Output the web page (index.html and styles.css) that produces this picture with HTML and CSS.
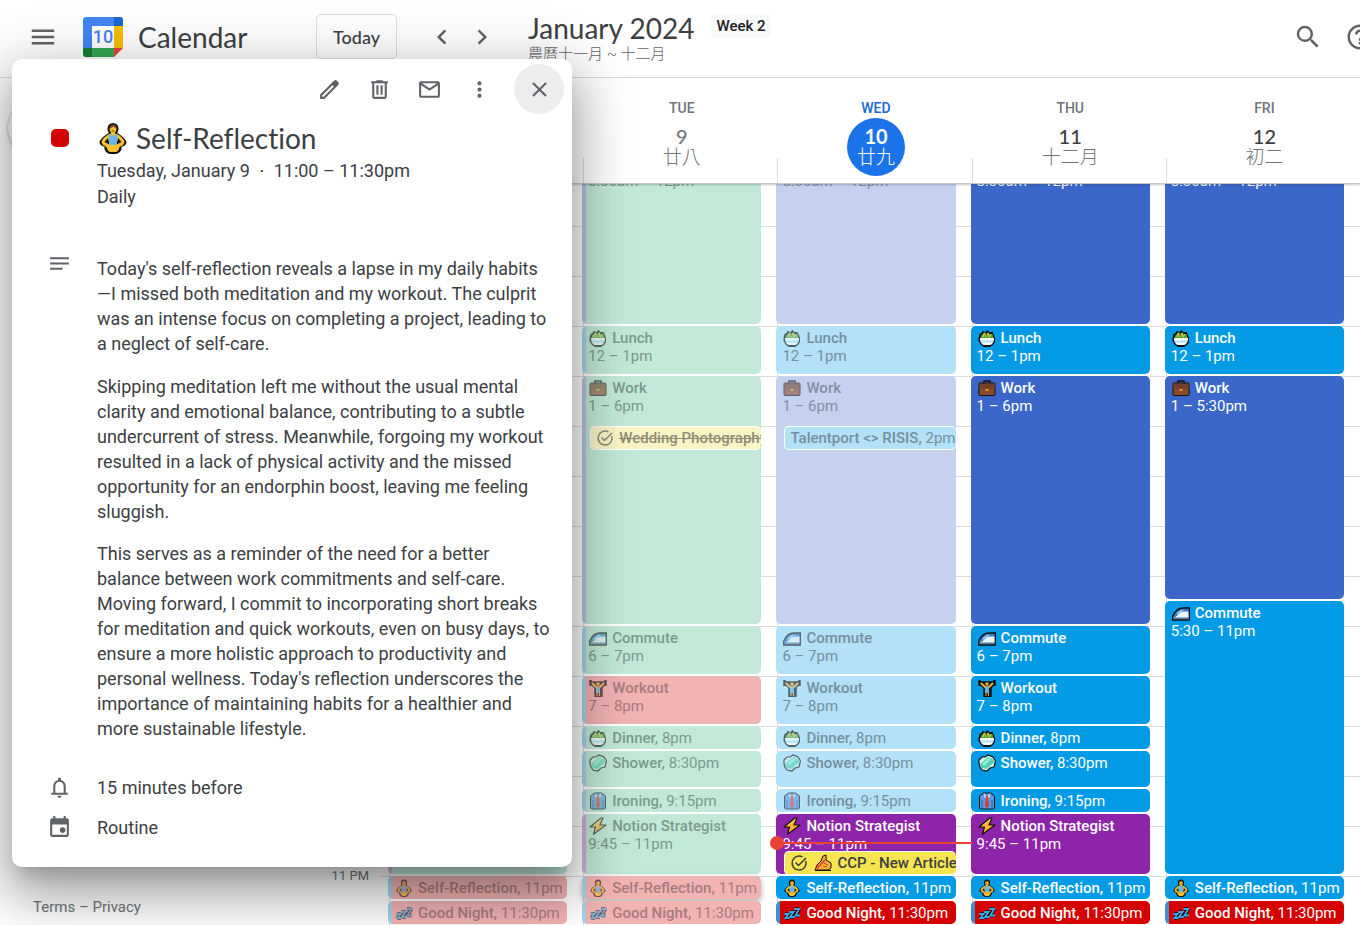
FILE: index.html
```html
<!DOCTYPE html>
<html lang="en">
<head>
  <meta charset="utf-8">
  <title>Calendar</title>
  <link rel="stylesheet" href="styles.css">
</head>
<body>

  <!-- icons shared by the events -->
  <svg class="sprite" aria-hidden="true">
    <symbol id="salad" viewBox="0 0 18 18">
      <path d="M0.500 9L1.500 5l2-1 1-2 3 1 2-2 2 2 3 0 1.500 3 1 3v4l-2 3-3 2H6l-3-2-2.500-4z" fill="#111"/>
      <path d="M2.500 9l1-3 2-1 1-2 2 2 2-2 1 2 3 0 1 4z" fill="#57a52c"/>
      <path d="M5 8l1-4 2 4 2-4 1 4 2-3" fill="none" stroke="#b4e05c"/>
      <circle cx="8.500" cy="6.500" r="1" fill="#e2492f"/>
      <path d="M2 9h14c0 4-2 7-4 7H6c-2 0-4-3-4-7z" fill="#fff"/>
      <path d="M2.500 11.500h13l-.7 2H3.200z" fill="#a9e2f7"/>
    </symbol>
    <symbol id="briefcase" viewBox="0 0 18 18">
      <path d="M6 4V2h6v2" fill="none" stroke="#111" stroke-width="1.500"/>
      <rect x="1" y="4" width="16" height="12.500" rx="1" fill="#8b4b2b" stroke="#111"/>
      <path d="M1.500 5h15v4.500l-5 1h-5l-5-1z" fill="#75402a"/>
      <path d="M7.500 10h3v1.500h-3z" fill="#f5b93c"/>
    </symbol>
    <symbol id="train" viewBox="0 0 18 18">
      <path d="M.7 15v-3C3 7 7 4 11 4h6.300v12H.7z" fill="#2f7fc6" stroke="#111" stroke-width="1.300"/>
      <path d="M2 13.500C6 12.500 7 7.500 12 7.500h4.500v6z" fill="#eef4fb"/>
      <path d="M5 9l4-3h3c-3 1-4 3-7 5z" fill="#a7d4f5"/>
      <path d="M1.500 14.700h15" stroke="#777"/>
    </symbol>
    <symbol id="lifter" viewBox="0 0 18 18">
      <path d="M1.500 1v6M16.500 1v6M1 3.500h16" stroke="#111" stroke-width="2.500"/>
      <path d="M3 4l4.500 4v9h4V8L15 4" fill="none" stroke="#111" stroke-width="4.500"/>
      <path d="M3 4l4 4h4l4-4" fill="none" stroke="#f0b43c" stroke-width="2"/>
      <circle cx="9" cy="5" r="2" fill="#f0b43c" stroke="#111" stroke-width=".6"/>
      <path d="M7 8h4v6H7z" fill="#58b7dc"/>
      <path d="M8 14v3M10.500 14v3" stroke="#f0b43c"/>
    </symbol>
    <symbol id="soap" viewBox="0 0 18 18">
      <path d="M1 6l3-3 3 0 3-2 5 2 2.500 4-1.500 6-4 1-3 3-5-1-2-3-1-3z" fill="#d8f5ef" stroke="#111" stroke-width="1.200"/>
      <path d="M2 10l8-7 5 2 1.500 3-8 7-5-1z" fill="#53d2b3"/>
      <path d="M4 10l6-6 3 1-7 7z" fill="#93ecd6"/>
    </symbol>
    <symbol id="shirt" viewBox="0 0 18 18">
      <path d="M1.500 4l4-3h7l4 3v12l-1 1H2.500l-1-1z" fill="#5a97dd" stroke="#111"/>
      <path d="M4 8v9M14 8v9" stroke="#2c5e9c"/>
      <path d="M6 1l3 4 3-4v4l-3 2-3-2z" fill="#b9dafa"/>
      <path d="M8 4h2l1 10-2 2-2-2z" fill="#d63a31"/>
    </symbol>
    <symbol id="bolt" viewBox="0 0 18 18">
      <path d="M12 1L1 10h5.500L4.500 17.300 17 8h-6L14 1z" fill="#fdb32c" stroke="#111" stroke-width="1.200" stroke-linejoin="round"/>
      <path d="M12 2.500L5 8.500" stroke="#ffe082"/>
    </symbol>
    <symbol id="yoga" viewBox="0 0 30 32">
      <path d="M9.500 6.500a5.500 5.500 0 0 1 11 0c0 2-.5 3.500-1.500 4.500 3 1 9.500 6.500 9.500 9.500 0 2-2.500 3.500-5 4.500 1 3-3 7-5.500 7h-6c-2.500 0-6.500-4-5.500-7-2.500-1-5-2.500-5-4.500 0-3 6.500-8.500 9.500-9.500-1-1-1.500-2.500-1.500-4.500z" fill="#111"/>
      <path d="M13 9h4v2.500l3 1c3 2 6.500 5.500 6.500 7.500 0 3-5.500 4-7.500 4.500h-8C9 24 3.500 23 3.500 20c0-2 3.500-5.500 6.500-7.500l3-1z" fill="#fbc02d"/>
      <path d="M10 16l-3.500 4 5 2.500zM20 16l3.500 4-5 2.500z" fill="#111"/>
      <path d="M11 12.500l4 1 4-1 .5 4-1 6.500h-7l-1-6.500z" fill="#69b4e8"/>
      <path d="M4 22c3 1.500 7 3 11 1.500C19 25 23 23.500 26 22c-1 2-3 2-4.500 3-.5 3-2.500 5-4 5h-5c-1.500 0-3.500-2-4-5C7 24 5 24 4 22z" fill="#fbc02d"/>
      <circle cx="15" cy="7" r="3.500" fill="#fbc02d"/>
      <path d="M11.500 7c-.5-6 7.500-6 7 0l-3-2.500z" fill="#7a4b22"/>
      <path d="M13.500 9h3" stroke="#8a4e12"/>
    </symbol>
    <symbol id="zzz" viewBox="0 0 18 18">
      <g fill="none" stroke="#111" stroke-width="3.600" stroke-linejoin="bevel"><path d="M2 10h3.500L2.500 14H6M6.500 8h4L7 13h4M12 5h4.200L12.500 11.500h4"/></g>
      <g fill="none" stroke="#3aa9ea" stroke-width="1.800"><path d="M1.500 10h4L2.500 14H6M6 8h4.500L7 13h4.500M11.500 5h4.700L12.500 11.500h4.500"/></g>
    </symbol>
    <symbol id="writing" viewBox="0 0 18 18">
      <path d="M1 16L3 11l4-4 2-5 3-1 0 5 5 3v5l-3 2z" fill="#fbb03b" stroke="#111"/>
      <path d="M2 15L11 6" stroke="#e5532d" stroke-width="2"/>
      <path d="M10 9l4 2M9 12l4 1" stroke="#a85a10"/>
      <path d="M1 16.500h16" stroke="#111"/>
    </symbol>
    <symbol id="check" viewBox="0 0 18 18">
      <path d="M15.800 7A7 7 0 1 1 12.500 2.900" fill="none" stroke="currentColor" stroke-width="1.500"/>
      <path d="M5.500 8.500L8.500 11.500L16 4" fill="none" stroke="currentColor" stroke-width="1.500"/>
    </symbol>
  </svg>

  <header class="topbar">
    <button class="icon-btn" aria-label="Main menu">
      <svg width="30" height="30" viewBox="0 0 24 24"><path d="M3 18h18v-2H3v2zm0-5h18v-2H3v2zm0-7v2h18V6H3z"/></svg>
    </button>
    <a class="brand" href="#">
      <svg class="logo" viewBox="0 0 40 40" width="40" height="40">
        <path d="M3 0h28v9H9v22H0V3a3 3 0 0 1 3-3z" fill="#4285f4"/>
        <path d="M31 0h6a3 3 0 0 1 3 3v6h-9z" fill="#1967d2"/>
        <path d="M31 9h9v22h-9z" fill="#fbbc04"/>
        <path d="M9 31h22v9H9z" fill="#34a853"/>
        <path d="M0 31h9v9H3a3 3 0 0 1-3-3z" fill="#188038"/>
        <path d="M31 31h9l-9 9z" fill="#ea4335"/>
        <path d="M9 9h22v22H9z" fill="#fff"/>
        <text x="20" y="26" text-anchor="middle" class="logo-day">10</text>
      </svg>
      <span>Calendar</span>
    </a>
    <button class="today">Today</button>
    <div class="pager">
      <button class="icon-btn" aria-label="Previous week">
        <svg width="30" height="30" viewBox="0 0 24 24"><path d="M15.400 7.400L14 6l-6 6 6 6 1.400-1.400-4.600-4.600z"/></svg>
      </button>
      <button class="icon-btn" aria-label="Next week">
        <svg width="30" height="30" viewBox="0 0 24 24"><path d="M10 6L8.600 7.400l4.600 4.600-4.600 4.600L10 18l6-6z"/></svg>
      </button>
    </div>
    <div class="period">
      <h1>January 2024</h1>
      <div class="lunar">農曆十一月 ~ 十二月</div>
    </div>
    <span class="week">Week 2</span>
    <div class="tools">
      <button class="icon-btn" aria-label="Search">
        <svg width="30" height="30" viewBox="0 0 24 24"><path d="M15.500 14h-.79l-.28-.27A6.470 6.470 0 0 0 16 9.500 6.500 6.500 0 1 0 9.500 16c1.610 0 3.090-.59 4.230-1.570l.27.28v.79l5 4.990L20.490 19l-4.990-5zm-6 0C7.010 14 5 11.990 5 9.500S7.010 5 9.500 5 14 7.010 14 9.500 11.990 14 9.500 14z"/></svg>
      </button>
      <button class="icon-btn" aria-label="Help">
        <svg width="30" height="30" viewBox="0 0 24 24"><path d="M11 18h2v-2h-2v2zm1-16C6.480 2 2 6.480 2 12s4.480 10 10 10 10-4.480 10-10S17.520 2 12 2zm0 18c-4.410 0-8-3.590-8-8s3.590-8 8-8 8 3.590 8 8-3.590 8-8 8zm0-14c-2.210 0-4 1.790-4 4h2c0-1.100.9-2 2-2s2 .9 2 2c0 2-3 1.750-3 5h2c0-2.250 3-2.500 3-5 0-2.210-1.790-4-4-4z"/></svg>
      </button>
    </div>
  </header>

  <div class="layout">
    <aside class="sidebar">
      <button class="create" aria-label="Create"></button>
      <div class="legal"><a href="#">Terms</a> – <a href="#">Privacy</a></div>
    </aside>

    <main class="calendar">
      <div class="day-heads">
        <div class="gutter"></div>
        <div class="head past"><span class="dow">MON</span><span class="num">8<small>廿七</small></span></div>
        <div class="head past"><span class="dow">TUE</span><span class="num">9<small>廿八</small></span></div>
        <div class="head now"><span class="dow">WED</span><span class="num">10<small>廿九</small></span></div>
        <div class="head"><span class="dow">THU</span><span class="num">11<small>十二月</small></span></div>
        <div class="head"><span class="dow">FRI</span><span class="num">12<small>初二</small></span></div>
      </div>
      <div class="scroller">
        <div class="hours">
          <div class="gutter times" id="times"></div>
          <div class="day"></div>
          <div class="day"></div>
          <div class="day"></div>
          <div class="day"></div>
          <div class="day"></div>
        </div>
      </div>
    </main>
  </div>

  <section class="popup" role="dialog" aria-label="Self-Reflection">
    <div class="actions">
      <button class="icon-btn" aria-label="Edit event">
        <svg width="25" height="25" viewBox="0 0 24 24"><path d="M20.410 4.940l-1.350-1.350a2 2 0 0 0-2.830 0L3 16.820V21h4.180L20.410 7.770a2 2 0 0 0 0-2.830zM6.410 19.060L5 19v-1.360l9.820-9.820 1.410 1.410z"/></svg>
      </button>
      <button class="icon-btn" aria-label="Delete event">
        <svg width="25" height="25" viewBox="0 0 24 24"><path d="M15 4V3H9v1H4v2h1v13c0 1.100.9 2 2 2h10c1.100 0 2-.9 2-2V6h1V4h-5zm2 15H7V6h10v13zM9 8h2v9H9zm4 0h2v9h-2z"/></svg>
      </button>
      <button class="icon-btn" aria-label="Email guests">
        <svg width="25" height="25" viewBox="0 0 24 24"><path d="M20 4H4c-1.100 0-2 .9-2 2v12c0 1.100.9 2 2 2h16c1.100 0 2-.9 2-2V6c0-1.100-.9-2-2-2zm-.8 2L12 10.800 4.800 6zM4 18V7.870l8 5.330 8-5.330V18z"/></svg>
      </button>
      <button class="icon-btn" aria-label="Options">
        <svg width="25" height="25" viewBox="0 0 24 24"><path d="M12 8c1.100 0 2-.9 2-2s-.9-2-2-2-2 .9-2 2 .9 2 2 2zm0 2c-1.100 0-2 .9-2 2s.9 2 2 2 2-.9 2-2-.9-2-2-2zm0 6c-1.100 0-2 .9-2 2s.9 2 2 2 2-.9 2-2-.9-2-2-2z"/></svg>
      </button>
      <button class="icon-btn close" aria-label="Close">
        <svg width="25" height="25" viewBox="0 0 24 24"><path d="M19 6.410L17.590 5 12 10.590 6.410 5 5 6.410 10.590 12 5 17.590 6.410 19 12 13.410 17.590 19 19 17.590 13.410 12z"/></svg>
      </button>
    </div>

    <div class="row">
      <div class="mark"><span class="swatch"></span></div>
      <div>
        <h2><svg width="32" height="32"><use href="#yoga"/></svg>Self-Reflection</h2>
        <div class="when">Tuesday, January 9 &nbsp;⋅&nbsp; 11:00 – 11:30pm</div>
        <div class="when">Daily</div>
      </div>
    </div>

    <div class="row notes">
      <div class="mark">
        <svg width="25" height="25" viewBox="0 0 24 24"><path d="M3 18h12v-2H3v2zM3 6v2h18V6H3zm0 7h18v-2H3v2z"/></svg>
      </div>
      <div>
        <p>Today's self-reflection reveals a lapse in my daily habits<wbr><span class="keep">—I</span> missed both meditation and my workout. The culprit was an intense focus on completing a project, leading to a neglect of self-care.</p>
        <p>Skipping meditation left me without the usual mental clarity and emotional balance, contributing to a subtle undercurrent of stress. Meanwhile, forgoing my workout resulted in a lack of physical activity and the missed opportunity for an endorphin boost, leaving me feeling sluggish.</p>
        <p>This serves as a reminder of the need for a better balance between work commitments and self-care. Moving forward, I commit to incorporating short breaks for meditation and quick workouts, even on busy days, to ensure a more holistic approach to productivity and personal wellness. Today's reflection underscores the importance of maintaining habits for a healthier and more sustainable lifestyle.</p>
      </div>
    </div>

    <div class="row detail">
      <div class="mark">
        <svg width="25" height="25" viewBox="0 0 24 24"><path d="M18 17v-6c0-3.070-1.630-5.640-4.500-6.320V4a1.500 1.500 0 0 0-3 0v.68C7.640 5.360 6 7.920 6 11v6H4v2h16v-2h-2zm-2 0H8v-6c0-2.480 1.510-4.500 4-4.500s4 2.020 4 4.500v6zm-4 5c1.100 0 2-.9 2-2h-4c0 1.100.9 2 2 2z"/></svg>
      </div>
      <div>15 minutes before</div>
    </div>
    <div class="row detail">
      <div class="mark">
        <svg width="25" height="25" viewBox="0 0 24 24"><path d="M19 3h-1V1h-2v2H8V1H6v2H5c-1.100 0-2 .9-2 2v14c0 1.100.9 2 2 2h14c1.100 0 2-.9 2-2V5c0-1.100-.9-2-2-2zm0 16H5V9h14v10z"/><circle cx="15" cy="14.500" r="2.700"/></svg>
      </div>
      <div>Routine</div>
    </div>
  </section>

  <script src="script.js"></script>
</body>
</html>
```
FILE: styles.css
```css
* {
  box-sizing: border-box;
}

body {
  margin: 0;
  height: 100vh;
  display: flex;
  flex-direction: column;
  overflow: hidden;
  background: #fff;
  color: #3c4043;
  font-family: Roboto, "Noto Sans CJK TC", sans-serif;
  font-size: 18px;
}

button {
  font: inherit;
  color: inherit;
  padding: 0;
  border: 0;
  background: none;
  cursor: pointer;
}

a {
  color: inherit;
  text-decoration: none;
}

svg {
  fill: #5f6368;
  flex: none;
}

.sprite {
  display: none;
}

.icon-btn {
  width: 50px;
  height: 50px;
  flex: none;
  display: flex;
  align-items: center;
  justify-content: center;
  border-radius: 50%;
}

/* top bar */
.topbar {
  height: 78px;
  flex: none;
  display: flex;
  align-items: center;
  padding: 0 0 4px 18px;
  border-bottom: 1px solid #dadce0;
}

.brand {
  display: flex;
  align-items: center;
  gap: 15px;
  width: 233px;
  margin-left: 15px;
  font-family: Lato, sans-serif;
  font-size: 28px;
}

.logo-day {
  font: 500 18px Roboto, sans-serif;
  fill: #4285f4;
}

.today {
  width: 81px;
  height: 45px;
  border: 1px solid #dadce0;
  border-radius: 5px;
  font-family: Lato, sans-serif;
  font-weight: 500;
}

.pager {
  display: flex;
  margin-left: 25px;
}

.pager .icon-btn {
  width: 40px;
}

.period {
  align-self: flex-start;
  margin-left: 26px;
  padding-top: 11px;
}

.period h1 {
  margin: 0;
  font: 400 28px/34px Lato, sans-serif;
}

.lunar {
  font-size: 15px;
  line-height: 18px;
  font-weight: 300;
  color: #5f6368;
}

.week {
  align-self: flex-start;
  margin: 14px 0 0 17px;
  padding: 0 5px;
  border-radius: 5px;
  background: #f8f9fa;
  color: #202124;
  font-size: 15px;
  line-height: 24px;
  font-weight: 500;
}

.tools {
  display: flex;
  margin-left: auto;
  margin-right: -25px;
  gap: 2px;
}

/* page below the bar */
.layout {
  flex: 1;
  min-height: 0;
  display: flex;
}

.sidebar {
  width: 320px;
  flex: none;
  display: flex;
  flex-direction: column;
  justify-content: space-between;
  padding: 22px 0 8px 8px;
}

.create {
  width: 120px;
  height: 56px;
  border-radius: 28px;
  background: #fff;
  box-shadow: 0 1px 3px rgba(60, 64, 67, 0.5);
}

.legal {
  padding-left: 25px;
  font-size: 15px;
  line-height: 20px;
  color: #70757a;
}

.calendar {
  flex: 1;
  min-width: 0;
  display: flex;
  flex-direction: column;
}

.day-heads,
.hours {
  display: grid;
  grid-template-columns: 69px repeat(5, 1fr);
}

.day-heads {
  height: 106px;
  flex: none;
  z-index: 1;
  border-bottom: 1px solid #c4c7cb;
  box-shadow: 0 1px 2px rgba(60, 64, 67, 0.3);
}

.head {
  display: flex;
  flex-direction: column;
  align-items: center;
  padding: 21px 0 0 3px;
  background: linear-gradient(#dadce0, #dadce0) left bottom / 1px 25px no-repeat;
}

.dow {
  font-size: 14px;
  line-height: 19px;
  font-weight: 500;
  color: #70757a;
}

.num {
  display: flex;
  flex-direction: column;
  align-items: center;
  width: 58px;
  height: 58px;
  padding-top: 8px;
  border-radius: 50%;
  font: 500 20px/20px Lato, sans-serif;
}

.num small {
  font: 300 19px/20px "Noto Sans CJK TC", sans-serif;
  color: #70757a;
  white-space: nowrap;
}

.past .num {
  color: #70757a;
}

.now .dow {
  color: #1967d2;
}

.now .num {
  background: #1a73e8;
  font-weight: 700;
}

.now .num,
.now small {
  color: #fff;
}

.scroller {
  flex: 1;
  min-height: 0;
  overflow: hidden;
}

/* the first row is 8:30am, one hour is 50px */
.hours {
  height: 775px;
  margin-top: -33px;
  background: repeating-linear-gradient(#dadce0 0 1px, transparent 1px 50px) 60px 25px no-repeat;
}

.times,
.day {
  display: grid;
  grid-template-rows: repeat(62, 1fr);
  min-width: 0;
}

.times {
  padding-right: 20px;
  text-align: right;
  font-size: 13px;
  line-height: 20px;
  color: #70757a;
}

.times span {
  height: 20px;
  margin-top: -10px;
}

.day {
  position: relative;
  border-left: 1px solid #dadce0;
}

/* events */
.event {
  grid-column: 1;
  margin: 0 16px 2px -2px;
  padding: 3px 0 0 6px;
  border-radius: 5px;
  overflow: hidden;
  white-space: nowrap;
  font-size: 15px;
  line-height: 18px;
  color: #fff;
}

.event b {
  font-weight: 500;
}

.event svg {
  width: 20px;
  height: 18px;
  margin-right: 4px;
  vertical-align: top;
}

.event .check {
  width: 18px;
  margin-right: 5px;
  color: #3c4043;
}

.sky { background: #039be5; }
.blue { background: #3a67c9; }
.grape { background: #8e24aa; }
.red { background: #d50000; }
.green { background: #33b679; }
.yellow { background: #f6e550; color: #3c4043; }

.stripe-sky { background-image: linear-gradient(#3c8fc9, #3c8fc9); }
.stripe-blue { background-image: linear-gradient(#3a67c9, #3a67c9); }
.stripe-grape { background-image: linear-gradient(#8e24aa, #8e24aa); }

.stripe-sky,
.stripe-blue,
.stripe-grape {
  background-size: 4px 100%;
  background-repeat: no-repeat;
}

/* finished events fade to 30% of their colour */
.done { color: #84909a; }
.done svg { opacity: 0.6; }
.done.sky { background-color: #b3e1f7; color: #7490a0; }
.done.blue { background-color: #c4d1ef; color: #868ea6; }
.done.green { background-color: #c2e9d7; color: #7b9a8d; }
.done.red { background-color: #f2b3b3; color: #a77c7f; }
.done.yellow { background-color: #fbf5c6; color: #8f8d76; }
.done.stripe-sky { background-image: linear-gradient(#a6d3ea, #a6d3ea); }
.done.stripe-blue { background-image: linear-gradient(#b6c3e4, #b6c3e4); }
.done.stripe-grape { background-image: linear-gradient(#d0b0dc, #d0b0dc); }

.inset {
  z-index: 3;
  margin-left: 6px;
  margin-bottom: 1px;
  padding: 2px 0 0 5px;
  border: 1px solid #fff;
  border-right: 0;
}

.raised {
  box-shadow: 0 4px 5px rgba(0, 0, 0, 0.2), 0 1px 10px rgba(0, 0, 0, 0.12);
}

.now-line {
  position: absolute;
  left: -1px;
  right: 0;
  height: 2px;
  z-index: 2;
  background: #ea4335;
}

.now-line::before {
  content: "";
  position: absolute;
  left: -7px;
  top: -6px;
  width: 14px;
  height: 14px;
  border-radius: 50%;
  background: #ea4335;
}

/* event details */
.popup {
  position: absolute;
  z-index: 10;
  left: 12px;
  top: 59px;
  width: 560px;
  padding: 5px 8px 20px 35px;
  border-radius: 10px;
  background: #fff;
  line-height: 25px;
  box-shadow: 0 30px 48px 4px rgba(0, 0, 0, 0.2), 0 11px 58px 10px rgba(0, 0, 0, 0.2), 0 14px 19px -9px rgba(0, 0, 0, 0.2);
}

.actions {
  display: flex;
  justify-content: flex-end;
}

.close {
  margin-left: 10px;
  background: #eceded;
}

.row {
  display: flex;
  gap: 25px;
}

.mark {
  width: 25px;
  height: 25px;
  flex: none;
  display: flex;
  align-items: center;
  justify-content: center;
}

.swatch {
  width: 18px;
  height: 18px;
  margin-top: 22px;
  border-radius: 5px;
  background: #d50000;
}

.popup h2 {
  display: flex;
  align-items: center;
  gap: 7px;
  height: 36px;
  margin: 6px 0 2px;
  font: 400 28px/36px Lato, sans-serif;
  font-variant-ligatures: none;
}

.when {
  line-height: 26px;
}

.notes {
  padding: 41px 10px 26px 0;
}

.notes p {
  margin: 5px 0 0;
}

.notes p + p {
  margin-top: 18px;
}

.notes p:last-child {
  margin-top: 17px;
}

.keep {
  white-space: nowrap;
}

.detail {
  align-items: center;
  height: 40px;
}
```
FILE: script.js
```javascript
const days = document.querySelectorAll('.day');
const times = document.querySelector('#times');
const dayStart = 8.5;

// [day, start, end, colour classes, icon, title, time]
const events = [
  [0, 21.75, 23, 'green stripe-grape done', 'bolt', 'Notion Strategist', '9:45 – 11pm'],
  [0, 23, 23.5, 'red stripe-sky done', 'yoga', 'Self-Reflection', '11pm'],
  [0, 23.5, 24, 'red stripe-sky done', 'zzz', 'Good Night', '11:30pm'],

  [1, 8.5, 12, 'green stripe-blue done', 'briefcase', 'Work', '8:30am – 12pm'],
  [1, 12, 13, 'green stripe-sky done', 'salad', 'Lunch', '12 – 1pm'],
  [1, 13, 18, 'green stripe-blue done', 'briefcase', 'Work', '1 – 6pm'],
  [1, 14, 14.5, 'yellow inset task done', '', 'Wedding Photography', ''],
  [1, 18, 19, 'green stripe-sky done', 'train', 'Commute', '6 – 7pm'],
  [1, 19, 20, 'red stripe-sky done', 'lifter', 'Workout', '7 – 8pm'],
  [1, 20, 20.5, 'green stripe-sky done', 'salad', 'Dinner', '8pm'],
  [1, 20.5, 21.25, 'green stripe-sky done', 'soap', 'Shower', '8:30pm'],
  [1, 21.25, 21.75, 'green stripe-sky done', 'shirt', 'Ironing', '9:15pm'],
  [1, 21.75, 23, 'green stripe-grape done', 'bolt', 'Notion Strategist', '9:45 – 11pm'],
  [1, 23, 23.5, 'red stripe-sky done raised', 'yoga', 'Self-Reflection', '11pm'],
  [1, 23.5, 24, 'red stripe-sky done', 'zzz', 'Good Night', '11:30pm'],

  [2, 8.5, 12, 'blue done', 'briefcase', 'Work', '8:30am – 12pm'],
  [2, 12, 13, 'sky done', 'salad', 'Lunch', '12 – 1pm'],
  [2, 13, 18, 'blue done', 'briefcase', 'Work', '1 – 6pm'],
  [2, 14, 14.5, 'sky inset done', '', 'Talentport <> RISIS', '2pm'],
  [2, 18, 19, 'sky done', 'train', 'Commute', '6 – 7pm'],
  [2, 19, 20, 'sky done', 'lifter', 'Workout', '7 – 8pm'],
  [2, 20, 20.5, 'sky done', 'salad', 'Dinner', '8pm'],
  [2, 20.5, 21.25, 'sky done', 'soap', 'Shower', '8:30pm'],
  [2, 21.25, 21.75, 'sky done', 'shirt', 'Ironing', '9:15pm'],
  [2, 21.75, 23, 'grape', 'bolt', 'Notion Strategist', '9:45 – 11pm'],
  [2, 22.5, 23, 'yellow inset task', 'writing', 'CCP - New Article', ''],
  [2, 23, 23.5, 'sky', 'yoga', 'Self-Reflection', '11pm'],
  [2, 23.5, 24, 'red stripe-sky', 'zzz', 'Good Night', '11:30pm'],

  [3, 8.5, 12, 'blue', 'briefcase', 'Work', '8:30am – 12pm'],
  [3, 12, 13, 'sky', 'salad', 'Lunch', '12 – 1pm'],
  [3, 13, 18, 'blue', 'briefcase', 'Work', '1 – 6pm'],
  [3, 18, 19, 'sky', 'train', 'Commute', '6 – 7pm'],
  [3, 19, 20, 'sky', 'lifter', 'Workout', '7 – 8pm'],
  [3, 20, 20.5, 'sky', 'salad', 'Dinner', '8pm'],
  [3, 20.5, 21.25, 'sky', 'soap', 'Shower', '8:30pm'],
  [3, 21.25, 21.75, 'sky', 'shirt', 'Ironing', '9:15pm'],
  [3, 21.75, 23, 'grape', 'bolt', 'Notion Strategist', '9:45 – 11pm'],
  [3, 23, 23.5, 'sky', 'yoga', 'Self-Reflection', '11pm'],
  [3, 23.5, 24, 'red stripe-sky', 'zzz', 'Good Night', '11:30pm'],

  [4, 8.5, 12, 'blue', 'briefcase', 'Work', '8:30am – 12pm'],
  [4, 12, 13, 'sky', 'salad', 'Lunch', '12 – 1pm'],
  [4, 13, 17.5, 'blue', 'briefcase', 'Work', '1 – 5:30pm'],
  [4, 17.5, 23, 'sky', 'train', 'Commute', '5:30 – 11pm'],
  [4, 23, 23.5, 'sky', 'yoga', 'Self-Reflection', '11pm'],
  [4, 23.5, 24, 'red stripe-sky', 'zzz', 'Good Night', '11:30pm']
];

// one grid row is a quarter of an hour
function row(hour) {
  return (hour - dayStart) * 4 + 1;
}

function icon(name) {
  return `<svg viewBox="0 0 18 18"><use href="#${name}" width="18" height="18"/></svg>`;
}

events.forEach(([day, start, end, classes, iconName, title, time]) => {
  const el = document.createElement('div');
  el.className = 'event ' + classes;
  el.style.gridRow = row(start) + ' / ' + row(end);

  let name = `<b>${title.replace('<>', '&lt;&gt;')}</b>`;
  if (classes.includes('task')) {
    el.innerHTML = icon('check').replace('<svg', '<svg class="check"');
    if (classes.includes('done')) name = `<s>${name}</s>`;
  }
  if (iconName) el.innerHTML += icon(iconName);

  // short events keep the time on the title line
  if (time && end - start < 1) {
    name = name.replace('</b>', ',</b> ') + time;
  } else if (time) {
    name += '<br>' + time;
  }
  el.innerHTML += name;
  days[day].appendChild(el);
});

// hour labels
for (let h = 9; h < 24; h++) {
  const label = document.createElement('span');
  label.textContent = h < 12 ? h + ' AM' : (h % 12 || 12) + ' PM';
  label.style.gridRow = row(h);
  times.appendChild(label);
}

// current time, 10:19pm
const line = document.createElement('div');
line.className = 'now-line';
line.style.top = (22 + 19 / 60 - dayStart) / 15.5 * 100 + '%';
days[2].appendChild(line);
```
